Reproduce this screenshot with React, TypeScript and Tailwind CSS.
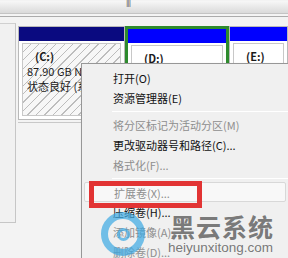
import React from 'react';

const font = "font-['Noto_Sans_CJK_SC','Microsoft_YaHei',sans-serif]";

type Item = { label: string; disabled?: boolean; hover?: boolean } | 'sep';

const items: Item[] = [
  { label: '打开(O)' },
  { label: '资源管理器(E)' },
  'sep',
  { label: '将分区标记为活动分区(M)', disabled: true },
  { label: '更改驱动器号和路径(C)...' },
  { label: '格式化(F)...', disabled: true },
  'sep',
  { label: '扩展卷(X)...', disabled: true, hover: true },
  { label: '压缩卷(H)...' },
  { label: '添加镜像(A)...', disabled: true },
  { label: '删除卷(D)...', disabled: true },
];

function Partition({
  name,
  bar,
  selected,
  hatched,
  className,
  children,
}: {
  name: string;
  bar: string;
  selected?: boolean;
  hatched?: boolean;
  className: string;
  children?: React.ReactNode;
}) {
  return (
    <div
      className={`${className} flex flex-col ${
        selected ? 'border-[3px] border-[#2e8b2e]' : 'border border-[#b9b9b9]'
      } bg-white`}
    >
      <div className={`h-[14px] ${bar}`} />
      <div
        className={`flex-1 m-[3px] mt-[2px] border border-[#c8c8c8] px-[4px] pt-[5px] text-[11px] leading-[15px] text-[#1a1a1a] overflow-hidden ${
          hatched
            ? 'bg-[repeating-linear-gradient(135deg,#f7f7f7_0px,#f7f7f7_5px,#bdbdbd_5px,#bdbdbd_6px)]'
            : 'bg-white'
        }`}
      >
        <div className="pl-[8px] font-bold">{name}</div>
        {children}
      </div>
    </div>
  );
}

export default function App() {
  return (
    <div className={`relative w-[288px] h-[258px] overflow-hidden bg-[#f3f3f3] ${font}`}>
      {/* window top strip */}
      <div className="h-[12px] bg-gradient-to-b from-[#f7f7f7] to-[#dadada] pl-[126px]">
        <span className="block mt-[1px] text-[8px] leading-[8px] text-[#777] tracking-[-1px] font-['DejaVu_Sans',sans-serif]">
          III
        </span>
      </div>
      <div className="h-[4px] bg-[#f4f4f4] border-t border-[#c4c4c4] border-b border-b-[#ababab]" />

      <div className="flex h-[242px]">
        {/* left labels column */}
        <div className="w-[18px] flex flex-col">
          <div className="h-[6px]" />
          <div className="h-[200px] border-r border-[#c6c6c6] border-t border-t-[#d0d0d0] border-b border-b-[#c6c6c6] bg-[#f1f1f1] mr-[2px]" />
        </div>

        {/* disks */}
        <div className="flex-1 flex flex-col">
          <div className="flex pt-[9px] h-[103px]">
            <Partition name="(C:)" bar="bg-[#0a0a80]" hatched className="w-[107px]">
              <div className="whitespace-nowrap">87.90 GB NTFS</div>
              <div className="whitespace-nowrap">状态良好 (系统, 启动)</div>
            </Partition>
            <Partition name="(D:)" bar="bg-[#0000ff]" selected className="w-[104px]" />
            <Partition name="(E:)" bar="bg-[#0000ff]" className="flex-1" />
          </div>
          <div className="h-[2px]" />
          <div className="h-[1px] bg-[#c8c8c8] w-[64px]" />
        </div>
      </div>

      {/* context menu */}
      <div className="absolute left-[81px] top-[63px] w-[212px] h-[200px] bg-[#f0f0f0] border border-[#979797] shadow-[2px_2px_3px_rgba(0,0,0,0.25)] pt-[4px] pl-[2px] text-[11px] text-[#111]">
        {items.map((it, i) =>
          it === 'sep' ? (
            <div key={i} className="h-[7px] flex items-center pl-[28px] pr-[2px]">
              <div className="h-[1px] w-full bg-[#d7d7d7] border-b border-white" />
            </div>
          ) : (
            <div
              key={i}
              className={`h-[20px] leading-[20px] pl-[29px] whitespace-nowrap ${
                it.disabled ? 'text-[#8e8e8e]' : ''
              } ${it.hover ? 'bg-[#f8f8f8] border border-[#d8d8d8] rounded-[2px] mr-[6px] leading-[18px] pl-[28px]' : ''}`}
            >
              {it.label}
            </div>
          )
        )}
      </div>

      {/* red highlight box */}
      <div className="absolute left-[89px] top-[181px] w-[113px] h-[27px] border-[5px] border-[#e23434]" />

      {/* watermark */}
      <div className="absolute left-[101px] top-[212px] w-[44px] h-[44px] rounded-full border-[7px] border-[#3aa8e2]/70 flex items-center justify-center">
        <div className="w-[13px] h-[13px] rounded-full border-[3px] border-[#3aa8e2]/70" />
      </div>
      <div className="absolute left-[170px] top-[212px] flex flex-col items-start text-[#6a6a6a]/90 whitespace-nowrap">
        <div className="text-[25px] leading-[28px] font-bold tracking-[1px]">黑云系统</div>
        <div className="text-[13.5px] leading-[15px] font-['Liberation_Sans',sans-serif] -ml-[2px]">heiyunxitong.com</div>
      </div>
    </div>
  );
}
